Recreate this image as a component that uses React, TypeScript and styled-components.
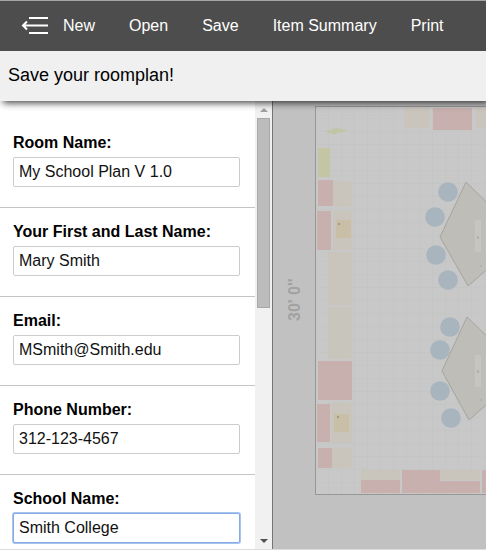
import React from "react";
import styled, { createGlobalStyle } from "styled-components";

const GlobalStyle = createGlobalStyle`
  *, *::before, *::after { box-sizing: border-box; }
  body {
    margin: 0;
    font-family: "Liberation Sans", Arial, sans-serif;
    font-size: 16px;
    color: #000;
  }
`;

const Page = styled.div`
  display: flex;
  flex-direction: column;
  height: 100vh;
  border-top: 1px solid #a3a6a3;
  border-bottom: 1px solid #dcdcdc;
  overflow: hidden;
`;

const Toolbar = styled.nav`
  position: relative;
  z-index: 2;
  display: flex;
  flex: none;
  align-items: center;
  gap: 34px;
  height: 50px;
  padding-left: 21px;
  background: #4d4d4d;
`;

const CollapseButton = styled.button`
  display: flex;
  margin-right: -20px;
  padding: 0;
  border: 0;
  background: none;
`;

const ToolbarButton = styled.button`
  padding: 0;
  border: 0;
  background: none;
  color: #fff;
  font: inherit;
  line-height: 20px;
  white-space: nowrap;
`;

const Banner = styled.header`
  position: relative;
  z-index: 1;
  display: flex;
  flex: none;
  align-items: center;
  height: 50px;
  padding: 0 8px 2px;
  background: #f0f0f0;
  box-shadow: 3px 2px 7px rgba(0, 0, 0, 0.75);
`;

const Title = styled.h1`
  margin: 0;
  font-size: 18px;
  font-weight: 400;
  line-height: 24px;
`;

const Workspace = styled.main`
  display: flex;
  flex: 1;
  min-height: 0;
`;

const Sidebar = styled.aside`
  display: flex;
  flex: none;
  width: 273px;
  border-right: 1px solid #757575;
  background: #fff;
`;

const Form = styled.form`
  flex: 1;
  min-width: 0;
  padding-top: 18px;
  overflow: hidden;
`;

const Field = styled.div`
  padding: 14px 15px 20px 13px;
  border-bottom: 1px solid #c4c4c4;
`;

const Label = styled.label`
  display: block;
  margin-bottom: 4px;
  font-weight: 700;
  line-height: 20px;
`;

const TextInput = styled.input<{ $active?: boolean }>`
  display: block;
  width: 100%;
  height: 30px;
  padding: 0 5px 1px;
  border: 1px solid ${(p) => (p.$active ? "#86aae6" : "#ccc")};
  border-radius: 2px;
  outline: 0;
  box-shadow: ${(p) => (p.$active ? "0 0 0 1px #a9c3ef" : "none")};
  background: #fff;
  color: #111;
  font: inherit;
`;

const Scrollbar = styled.div`
  display: flex;
  flex: none;
  flex-direction: column;
  width: 17px;
  background: #f1f1f1;
`;

const ScrollButton = styled.button`
  display: flex;
  flex: none;
  align-items: center;
  justify-content: center;
  height: 17px;
  padding: 0;
  border: 0;
  background: none;
`;

const ScrollTrack = styled.div`
  flex: 1;
  padding: 0 2px;
`;

const ScrollThumb = styled.div`
  height: 46%;
  border: 1px solid #a8a8a8;
  background: #bcbcbc;
`;

const Canvas = styled.section`
  flex: 1;
  min-width: 0;
  overflow: hidden;
  background: #c1c1c1;
`;

const Drawing = styled.svg`
  display: block;
`;

const fields = [
  { id: "room", label: "Room Name:", value: "My School Plan V 1.0" },
  { id: "person", label: "Your First and Last Name:", value: "Mary Smith" },
  { id: "email", label: "Email:", value: "MSmith@Smith.edu" },
  { id: "phone", label: "Phone Number:", value: "312-123-4567" },
  { id: "school", label: "School Name:", value: "Smith College", active: true },
];

const PINK = "#c8b0ae";
const BEIGE = "#c9c5bd";
const SAND = "#c9bfa6";
const YELLOW = "#c3c5a3";

type Block = [x: number, y: number, width: number, height: number, fill: string];

const blocks: Block[] = [
  [131, 6, 25, 21, BEIGE],
  [160, 7, 39, 22, PINK],
  [203, 6, 25, 21, BEIGE],
  [45, 47, 12, 29, YELLOW],
  [45, 79, 15, 26, PINK],
  [60, 80, 19, 26, BEIGE],
  [44, 110, 14, 39, PINK],
  [60, 110, 19, 39, BEIGE],
  [63, 119, 15, 18, SAND],
  [55, 151, 24, 53, BEIGE],
  [55, 206, 24, 52, "#c8c5bc"],
  [45, 260, 34, 39, PINK],
  [44, 303, 13, 38, PINK],
  [58, 302, 21, 40, BEIGE],
  [61, 313, 15, 18, SAND],
  [45, 347, 14, 20, PINK],
  [59, 347, 20, 20, BEIGE],
  [88, 369, 39, 10, BEIGE],
  [88, 379, 39, 13, PINK],
  [129, 369, 38, 23, PINK],
  [167, 369, 40, 10, BEIGE],
  [167, 380, 40, 12, PINK],
  [209, 369, 38, 23, PINK],
];

const chairs = [
  [175, 91], [162, 116], [163, 154], [175, 179],
  [177, 226], [167, 249], [167, 290], [178, 317],
];

function RoomPlan() {
  return (
    <Drawing width="1200" height="900" role="img" aria-label="Room plan">
      <defs>
        <pattern id="grid" x="43" y="5" width="13" height="13" patternUnits="userSpaceOnUse">
          <path d="M0 12.5H13M12.5 0V13" fill="none" stroke="#c4c5c5" />
        </pattern>
      </defs>
      <rect x="42.500" y="5.500" width="560" height="388" fill="#c8c8c8" />
      <rect x="42.500" y="5.500" width="560" height="388" fill="url(#grid)" stroke="#979797" />
      {blocks.map(([x, y, width, height, fill]) => (
        <rect key={`${x}-${y}`} x={x} y={y} width={width} height={height} fill={fill} />
      ))}
      <path d="M51 30l6-1 3-1 3-1 4 1 2 0 5 1-4 2-3 1-3 0-3 2-3-2-4 1 1-2z" fill="#c2c4a6" />
      <circle cx="66" cy="123" r="1" fill="#918d7d" />
      <circle cx="65" cy="316" r="1" fill="#918d7d" />
      {chairs.map(([cx, cy]) => (
        <circle key={`${cx}-${cy}`} cx={cx} cy={cy} r="9.800" fill="#a8b5be" />
      ))}
      <g fill="#bebdb7" stroke="#a5a49f">
        <path d="M193 81L167 136L195 185L250 137Z" />
        <path d="M194 216L169 270L196 319L251 271Z" />
      </g>
      <g fill="#c6c5c2">
        <rect x="202" y="119" width="6" height="32" rx="1" />
        <rect x="202" y="254" width="6" height="32" rx="1" />
      </g>
      <g fill="#b0afab">
        <rect x="204" y="135" width="2" height="3" />
        <rect x="204" y="269" width="2" height="3" />
        <circle cx="208" cy="165" r="1" />
        <circle cx="208" cy="299" r="1" />
      </g>
      <text
        transform="translate(27 220) rotate(-90)"
        fontFamily="Liberation Sans, Arial, sans-serif"
        fontSize="16"
        fontWeight="700"
        fill="#a2a2a2"
      >
        30' 0''
      </text>
    </Drawing>
  );
}

export default function App() {
  return (
    <>
      <GlobalStyle />
      <Page>
        <Toolbar>
          <CollapseButton type="button" aria-label="Collapse menu">
            <svg width="28" height="20" viewBox="0 0 28 20" fill="none" stroke="#fff" strokeWidth="2">
              <path d="M8 2H27M2 9.500H27M8 17H27M6 5.500L2 9.500L6 13.500" />
            </svg>
          </CollapseButton>
          {["New", "Open", "Save", "Item Summary", "Print"].map((name) => (
            <ToolbarButton key={name} type="button">{name}</ToolbarButton>
          ))}
        </Toolbar>
        <Banner>
          <Title>Save your roomplan!</Title>
        </Banner>
        <Workspace>
          <Sidebar>
            <Form>
              {fields.map((field) => (
                <Field key={field.id}>
                  <Label htmlFor={field.id}>{field.label}</Label>
                  <TextInput id={field.id} defaultValue={field.value} $active={field.active} />
                </Field>
              ))}
            </Form>
            <Scrollbar>
              <ScrollButton type="button" aria-label="Scroll up">
                <svg width="8" height="4" viewBox="0 0 8 4"><path d="M0 4L4 0L8 4Z" fill="#a0a0a0" /></svg>
              </ScrollButton>
              <ScrollTrack>
                <ScrollThumb />
              </ScrollTrack>
              <ScrollButton type="button" aria-label="Scroll down">
                <svg width="8" height="4" viewBox="0 0 8 4"><path d="M0 0L4 4L8 0Z" fill="#505050" /></svg>
              </ScrollButton>
            </Scrollbar>
          </Sidebar>
          <Canvas>
            <RoomPlan />
          </Canvas>
        </Workspace>
      </Page>
    </>
  );
}
